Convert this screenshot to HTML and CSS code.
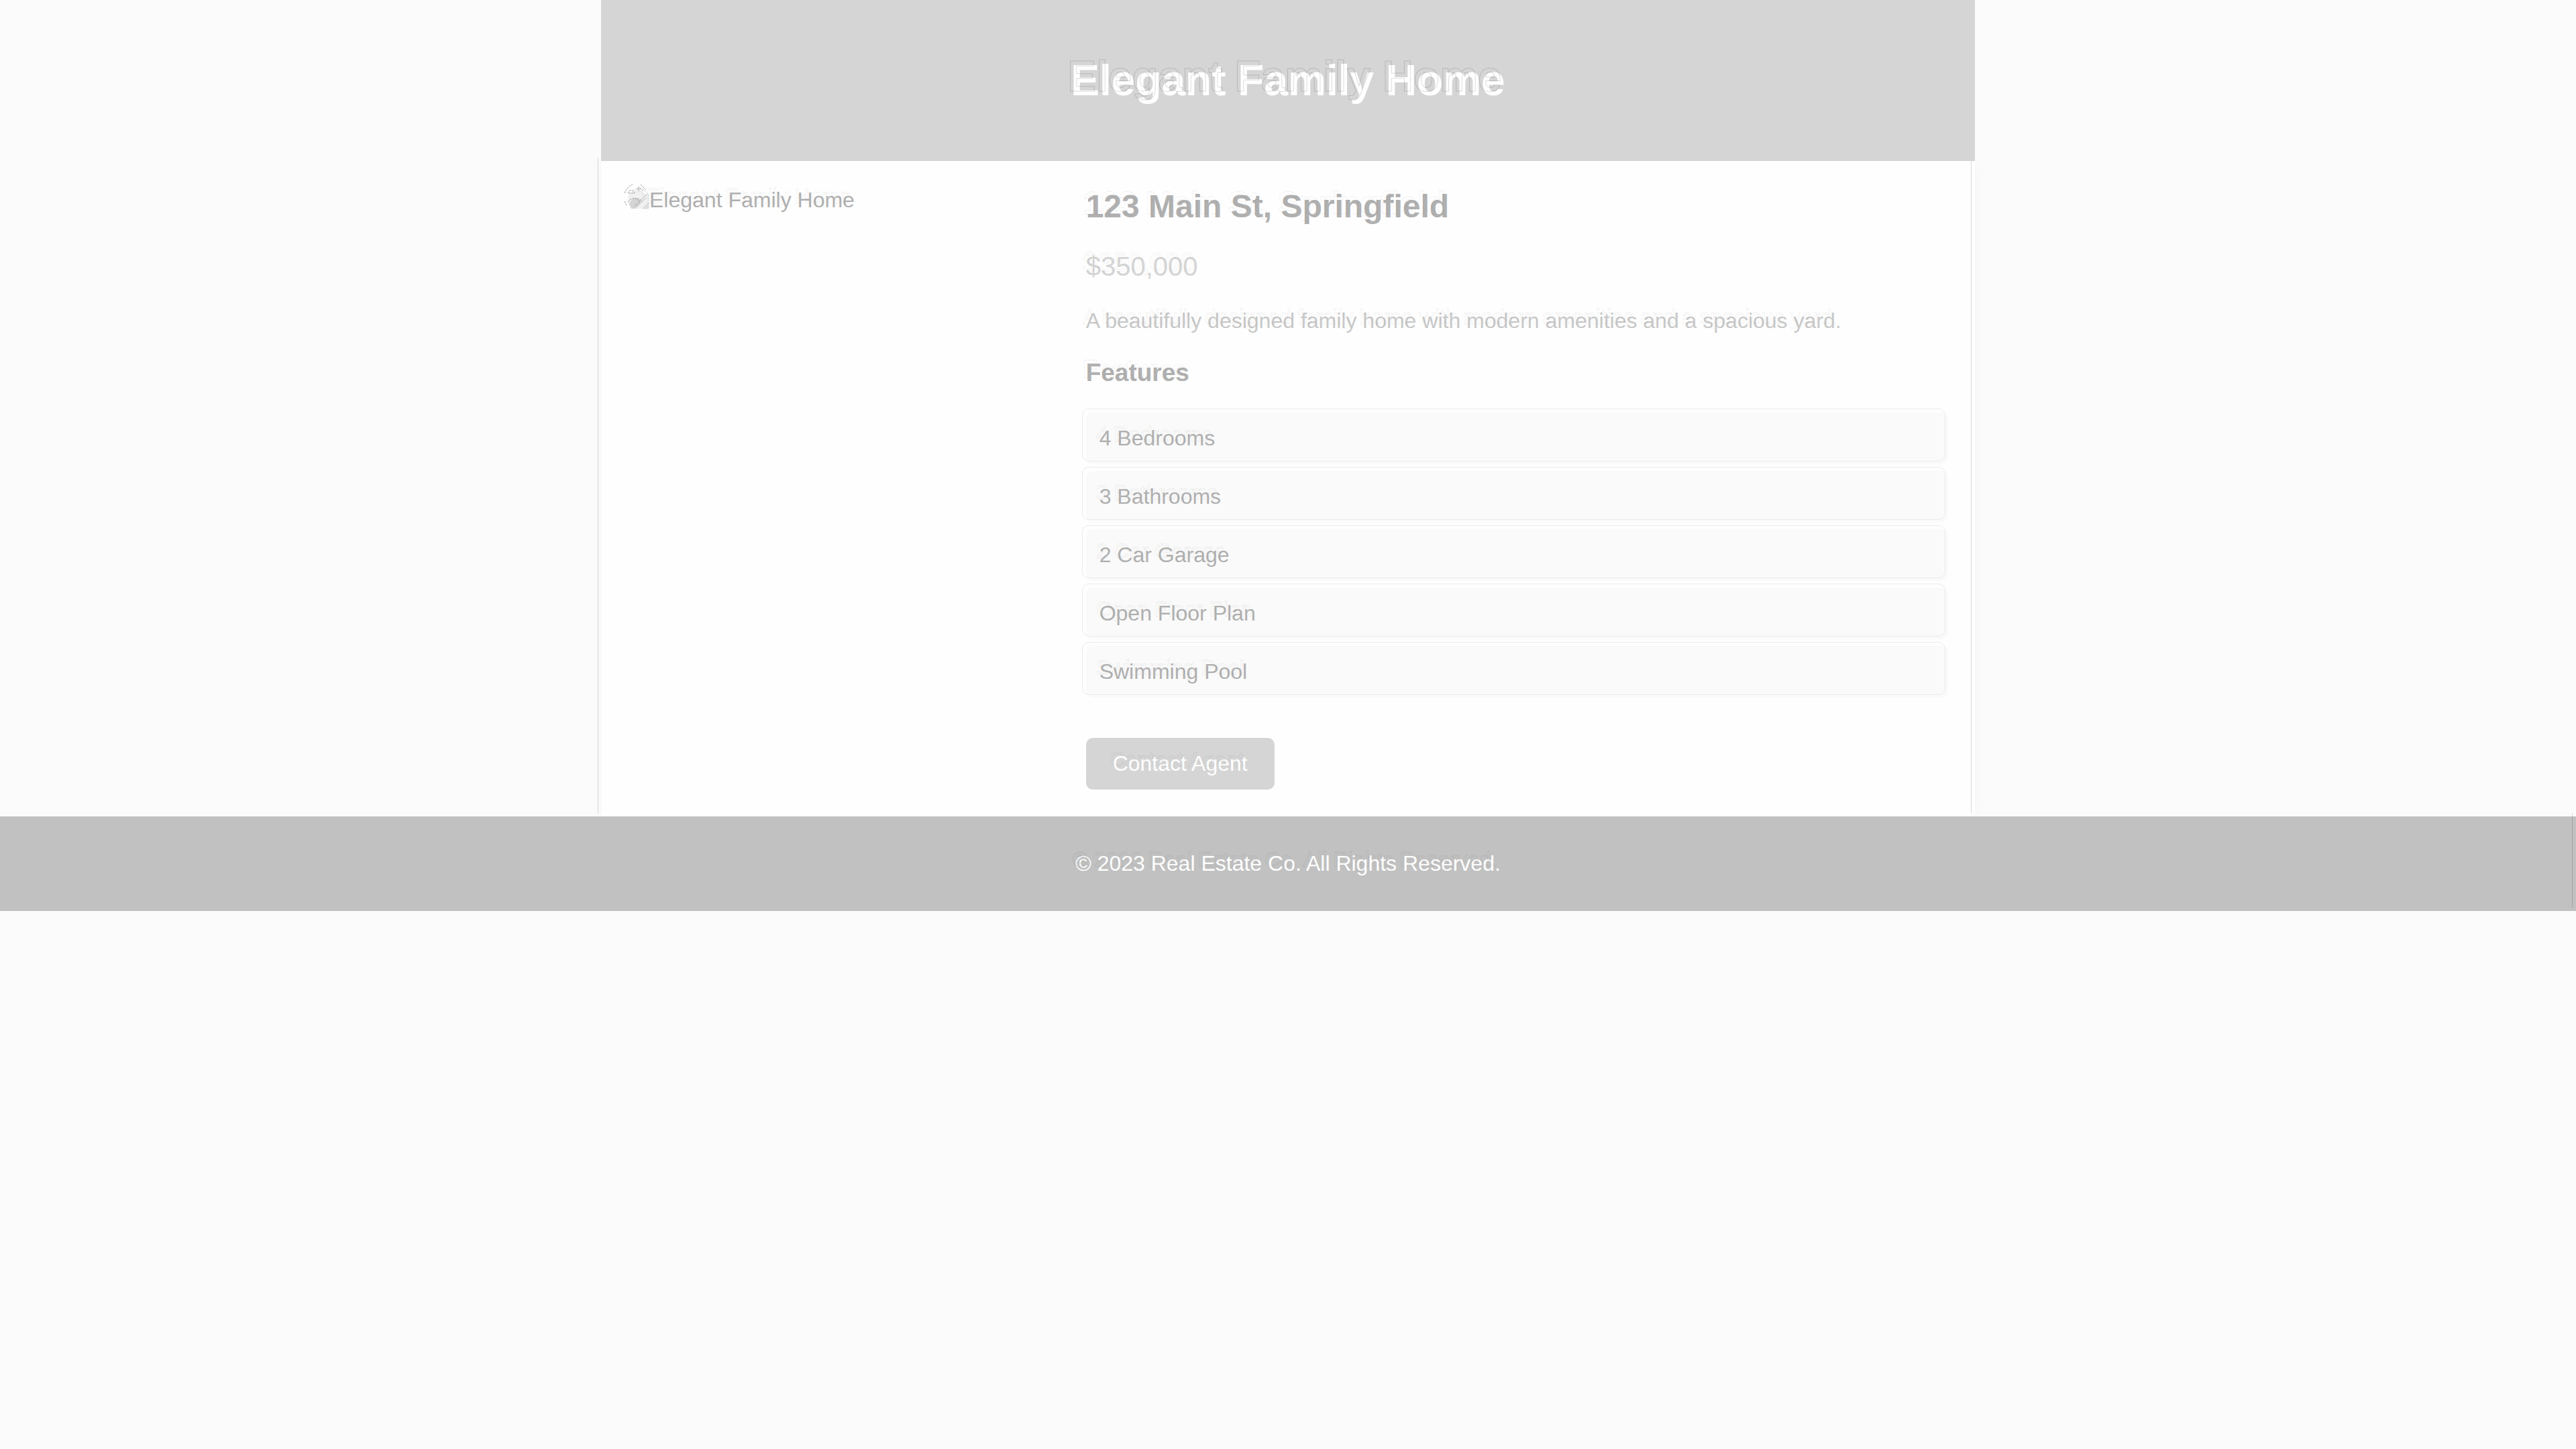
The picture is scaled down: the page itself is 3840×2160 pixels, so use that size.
FILE: index.html
```html
<!DOCTYPE html>
<html lang="en">
<head>
<meta charset="utf-8">
<meta name="viewport" content="width=device-width, initial-scale=1">
<title>Elegant Family Home</title>
<link rel="stylesheet" href="styles.css">
</head>
<body>
<header class="site-header">
  <h1 class="etched etched-strong" data-text="Elegant Family Home">Elegant Family Home</h1>
</header>
<main class="listing">
  <div class="photo">
    <svg class="photo-icon" viewBox="0 0 32 32" aria-hidden="true">
      <path d="M10 1h12l9 9v10L20 31H5L0 23V12z" fill="#f0f0f0"/>
      <path d="M22 1v9h9z" fill="#fdfdfd" stroke="#d8d8d8"/>
      <path d="M2 24c4-10 13-12 19-5l-9 12H5z" fill="#d4d4d4"/>
      <path d="M31 10v10M21 31l10-10v10z" fill="#dedede" stroke="#dedede"/>
      <path d="M-5 8C-2 1 2-3 7-5M19-5l8 8M0 8c2-6 8-6 10 0zM16-2v7M13 1h7M0 21c5-7 13-7 18 0M10 27L27 11M14 27l13-12M-5 20l3 6" fill="none" stroke="#a0a0a0" stroke-dasharray="3 1"/>
    </svg>
    <span class="etched" data-text="Elegant Family Home">Elegant Family Home</span>
  </div>
  <section class="details">
    <h2><span class="etched" data-text="123 Main St, Springfield">123 Main St, Springfield</span></h2>
    <p class="price"><span class="etched" data-text="$350,000">$350,000</span></p>
    <p class="description"><span class="etched" data-text="A beautifully designed family home with modern amenities and a spacious yard.">A beautifully designed family home with modern amenities and a spacious yard.</span></p>
    <h3><span class="etched" data-text="Features">Features</span></h3>
    <ul class="features">
      <li><span class="etched" data-text="4 Bedrooms">4 Bedrooms</span></li>
      <li><span class="etched" data-text="3 Bathrooms">3 Bathrooms</span></li>
      <li><span class="etched" data-text="2 Car Garage">2 Car Garage</span></li>
      <li><span class="etched" data-text="Open Floor Plan">Open Floor Plan</span></li>
      <li><span class="etched" data-text="Swimming Pool">Swimming Pool</span></li>
    </ul>
    <button class="contact" type="button"><span class="etched" data-text="Contact Agent">Contact Agent</span></button>
  </section>
</main>
<footer class="site-footer">
  <p class="etched" data-text="© 2023 Real Estate Co. All Rights Reserved.">© 2023 Real Estate Co. All Rights Reserved.</p>
</footer>
</body>
</html>
```
FILE: styles.css
```css
* { box-sizing: border-box; }

body {
  margin: 0;
  background: #fbfbfb;
  color: #b0b0b0;
  font-family: "Liberation Sans", Arial, sans-serif;
  font-size: 32px;
  line-height: 37px;
}

h1, h2, h3, p, ul { margin: 0; }

/* Fine outline that echoes the lettering, up and to the left */
.etched { position: relative; }

.etched::after {
  content: attr(data-text) / "";
  position: absolute;
  top: -6px;
  left: -5px;
  white-space: nowrap;
  color: transparent;
  -webkit-text-stroke: 1px rgba(0, 0, 0, 0.07);
  pointer-events: none;
}

.etched-strong::after { -webkit-text-stroke-color: rgba(0, 0, 0, 0.14); }

.site-header {
  position: relative;
  z-index: 1;
  display: flex;
  justify-content: center;
  max-width: 2048px;
  margin: 0 auto;
  padding: 84px 40px;
  background: #d5d5d5;
  color: #fff;
}

.site-header h1 {
  font-size: 64px;
  line-height: 72px;
}

.listing {
  position: relative;
  display: grid;
  grid-template-columns: 1fr 2fr;
  gap: 40px;
  max-width: 2048px;
  margin: 0 auto;
  padding: 40px;
  background: #fefefe;
  box-shadow: 0 0 20px rgba(0, 0, 0, 0.03);
}

.listing::before {
  content: "";
  position: absolute;
  inset: -5px 5px 5px -5px;
  border: solid #d8d8d8;
  border-width: 0 1px;
  pointer-events: none;
}

.photo {
  display: flex;
  align-items: flex-start;
}

.photo-icon {
  width: 32px;
  height: 32px;
  overflow: visible;
}

h2 {
  margin-bottom: 40px;
  font-size: 48px;
  line-height: 55px;
}

.price {
  margin-bottom: 40px;
  color: #d5d5d5;
  font-size: 40px;
  line-height: 45px;
}

.description {
  margin-bottom: 37px;
  color: #c8c8c8;
}

h3 {
  margin-bottom: 38px;
  font-size: 37px;
  line-height: 43px;
}

.features {
  display: grid;
  gap: 10px;
  margin-bottom: 60px;
  padding: 0;
  list-style: none;
}

.features li {
  position: relative;
  padding: 20px;
  border-radius: 10px;
  background: #fafafa;
}

.features li::before {
  content: "";
  position: absolute;
  inset: -6px 4px 4px -6px;
  border: 1px solid #ebebeb;
  border-radius: 10px;
  pointer-events: none;
}

.contact {
  display: block;
  padding: 20px 40px;
  border: 0;
  border-radius: 10px;
  background: #d5d5d5;
  color: #fff;
  font: inherit;
  cursor: pointer;
}

.site-footer {
  position: relative;
  display: flex;
  justify-content: center;
  padding: 52px 40px;
  background: #c1c1c1;
  color: #fff;
}

.site-footer::before {
  content: "";
  position: absolute;
  inset: -5px 5px 5px 0;
  border-right: 1px solid rgba(0, 0, 0, 0.15);
  pointer-events: none;
}
```
